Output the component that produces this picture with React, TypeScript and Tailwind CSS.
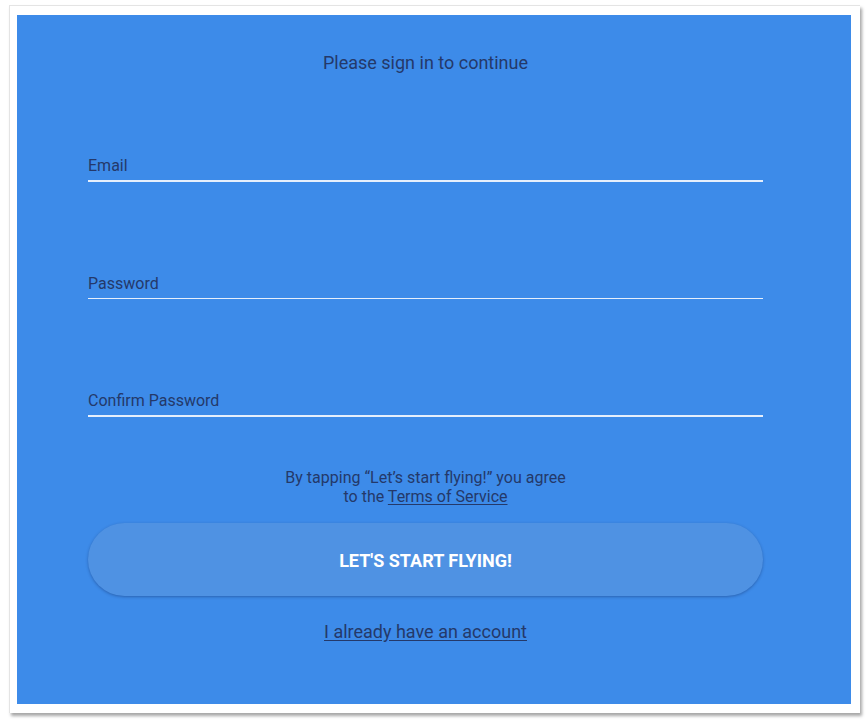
const navy = 'text-[#24396a]';

function Field({ label }: { label: string }) {
  return (
    <div className="flex flex-col">
      <span className={`text-[16px] leading-[19px] ${navy}`}>{label}</span>
      <div className="mt-[5px] h-[1.5px] w-full bg-[#e6effc]" />
    </div>
  );
}

export default function App() {
  return (
    <div className="h-[724px] w-[868px] bg-white font-['Roboto',sans-serif]">
      <div className="ml-[9px] mt-[5px] h-[708px] w-[851px] border-l border-t border-[#e4e4e4] bg-white pb-[9px] pl-[7px] pr-[9px] pt-[9px] shadow-[2px_3px_3px_rgba(0,0,0,0.35)]">
        <div className="flex h-full w-full flex-col bg-[#3d8be9]">
          <div className="ml-[71px] flex w-[675px] flex-col">
            <h1 className={`mt-[37px] text-center text-[18px] leading-[22px] ${navy}`}>
              Please sign in to continue
            </h1>

            <div className="mt-[82px] flex flex-col gap-[92px]">
              <Field label="Email" />
              <Field label="Password" />
              <Field label="Confirm Password" />
            </div>

            <p className={`mt-[51px] text-center text-[16px] leading-[19px] ${navy}`}>
              By tapping “Let’s start flying!” you agree
              <br />
              to the <a className="underline underline-offset-2">Terms of Service</a>
            </p>

            <button className="mt-[17px] flex h-[73px] w-full items-center justify-center rounded-full bg-[#4f92e3] pt-[2px] text-[18px] font-bold text-white shadow-[0_1px_3px_rgba(20,50,110,0.45)]">
              LET'S START FLYING!
            </button>

            <a className={`mx-auto mt-[25px] text-[18px] leading-[21px] underline underline-offset-2 ${navy}`}>
              I already have an account
            </a>
          </div>
        </div>
      </div>
    </div>
  );
}
